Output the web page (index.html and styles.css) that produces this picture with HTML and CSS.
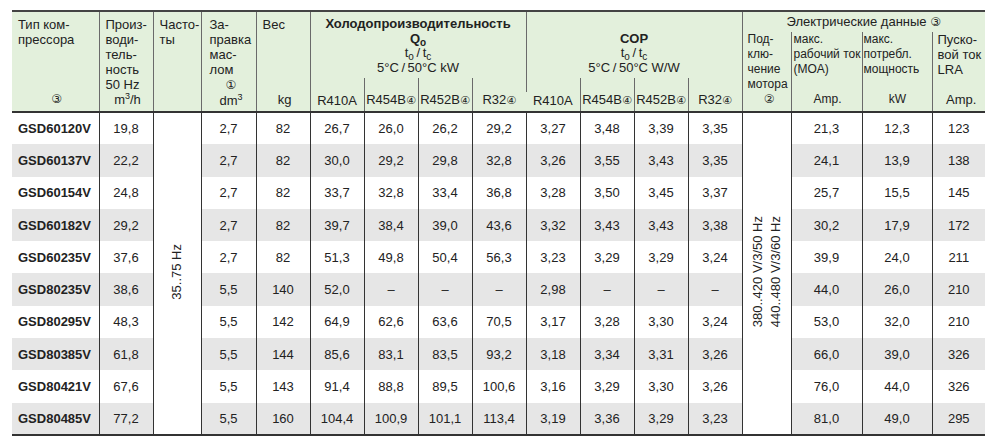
FILE: index.html
```html
<!DOCTYPE html>
<html lang="ru">
<head>
<meta charset="utf-8">
<title>GSD</title>
<link rel="stylesheet" href="styles.css">
</head>
<body>
<div class="wrap">
<table class="t">
<colgroup>
<col class="w87"><col class="w54"><col class="w48"><col class="w55"><col class="w54">
<col class="w54"><col class="w54"><col class="w54"><col class="w54">
<col class="w54"><col class="w54"><col class="w54"><col class="w54">
<col class="w49"><col class="w71"><col class="w70"><col class="w53">
</colgroup>
<thead>
<tr class="ra">
<th rowspan="3" class="hl first"><div class="hc"><span>Тип ком-<br>прессора</span><span class="ctr"><span class="ci big">③</span></span></div></th>
<th rowspan="3" class="hl"><div class="hc"><span>Произ-<br>води-<br>тель-<br>ность<br>50 Hz</span><span class="ctr">m<sup>3</sup>/h</span></div></th>
<th rowspan="3" class="hl"><div class="hc"><span>Часто-<br>ты</span></div></th>
<th rowspan="3" class="hl pl8"><div class="hc"><span>За-<br>правка<br>мас-<br>лом<br><span class="ctr blk"><span class="ci big">①</span></span></span><span class="ctr">dm<sup>3</sup></span></div></th>
<th rowspan="3" class="hl"><div class="hc"><span>Вес</span><span class="ctr">kg</span></div></th>
<th rowspan="2" colspan="4" class="grp"><b>Холодопроизводительность</b><br><b>Q<sub>o</sub></b><br>t<sub>o</sub>&#8201;/&#8201;t<sub>c</sub><br>5°C&#8201;/&#8201;50°C kW</th>
<th rowspan="2" colspan="4" class="grp"><br><b>COP</b><br>t<sub>o</sub>&#8201;/&#8201;t<sub>c</sub><br>5°C&#8201;/&#8201;50°C W/W</th>
<th colspan="4" class="el">Электрические данные <span class="ci big">③</span></th>
</tr>
<tr class="rb">
<th rowspan="2" class="he pl5"><div class="hc2"><span>Под-<br>клю-<br>чение<br>мотора</span><span class="ctr"><span class="ci big">②</span></span></div></th>
<th rowspan="2" class="he pl2"><div class="hc2"><span>макс.<br>рабочий ток<br>(MOA)</span><span class="ctr">Amp.</span></div></th>
<th rowspan="2" class="he pl1"><div class="hc2"><span>макс.<br>потребл.<br>мощность</span><span class="ctr">kW</span></div></th>
<th rowspan="2" class="he he13 pl5"><div class="hc2"><span>Пуско-<br>вой ток<br>LRA</span><span class="ctr">Amp.</span></div></th>
</tr>
<tr class="rc">
<th class="sub">R410A</th>
<th class="sub">R454B<span class="ci">④</span></th>
<th class="sub">R452B<span class="ci">④</span></th>
<th class="sub">R32<span class="ci">④</span></th>
<th class="sub gap">R410A</th>
<th class="sub">R454B<span class="ci">④</span></th>
<th class="sub">R452B<span class="ci">④</span></th>
<th class="sub">R32<span class="ci">④</span></th>
</tr>
</thead>
<tbody>
<tr>
<td class="m">GSD60120V</td><td>19,8</td>
<td rowspan="10" class="rs"><span class="rot">35..75 Hz</span></td>
<td>2,7</td><td>82</td>
<td>26,7</td><td>26,0</td><td>26,2</td><td>29,2</td>
<td>3,27</td><td>3,48</td><td>3,39</td><td>3,35</td>
<td rowspan="10" class="rs"><span class="rot">380..420 V/3/50 Hz<br>440..480 V/3/60 Hz</span></td>
<td>21,3</td><td>12,3</td><td>123</td>
</tr>
<tr class="alt">
<td class="m">GSD60137V</td><td>22,2</td><td>2,7</td><td>82</td>
<td>30,0</td><td>29,2</td><td>29,8</td><td>32,8</td>
<td>3,26</td><td>3,55</td><td>3,43</td><td>3,35</td>
<td>24,1</td><td>13,9</td><td>138</td>
</tr>
<tr>
<td class="m">GSD60154V</td><td>24,8</td><td>2,7</td><td>82</td>
<td>33,7</td><td>32,8</td><td>33,4</td><td>36,8</td>
<td>3,28</td><td>3,50</td><td>3,45</td><td>3,37</td>
<td>25,7</td><td>15,5</td><td>145</td>
</tr>
<tr class="alt">
<td class="m">GSD60182V</td><td>29,2</td><td>2,7</td><td>82</td>
<td>39,7</td><td>38,4</td><td>39,0</td><td>43,6</td>
<td>3,32</td><td>3,43</td><td>3,43</td><td>3,38</td>
<td>30,2</td><td>17,9</td><td>172</td>
</tr>
<tr>
<td class="m">GSD60235V</td><td>37,6</td><td>2,7</td><td>82</td>
<td>51,3</td><td>49,8</td><td>50,4</td><td>56,3</td>
<td>3,23</td><td>3,29</td><td>3,29</td><td>3,24</td>
<td>39,9</td><td>24,0</td><td>211</td>
</tr>
<tr class="alt">
<td class="m">GSD80235V</td><td>38,6</td><td>5,5</td><td>140</td>
<td>52,0</td><td>–</td><td>–</td><td>–</td>
<td>2,98</td><td>–</td><td>–</td><td>–</td>
<td>44,0</td><td>26,0</td><td>210</td>
</tr>
<tr>
<td class="m">GSD80295V</td><td>48,3</td><td>5,5</td><td>142</td>
<td>64,9</td><td>62,6</td><td>63,6</td><td>70,5</td>
<td>3,17</td><td>3,28</td><td>3,30</td><td>3,24</td>
<td>53,0</td><td>32,0</td><td>210</td>
</tr>
<tr class="alt">
<td class="m">GSD80385V</td><td>61,8</td><td>5,5</td><td>144</td>
<td>85,6</td><td>83,1</td><td>83,5</td><td>93,2</td>
<td>3,18</td><td>3,34</td><td>3,31</td><td>3,26</td>
<td>66,0</td><td>39,0</td><td>326</td>
</tr>
<tr>
<td class="m">GSD80421V</td><td>67,6</td><td>5,5</td><td>143</td>
<td>91,4</td><td>88,8</td><td>89,5</td><td>100,6</td>
<td>3,16</td><td>3,29</td><td>3,30</td><td>3,26</td>
<td>76,0</td><td>44,0</td><td>326</td>
</tr>
<tr class="alt">
<td class="m">GSD80485V</td><td>77,2</td><td>5,5</td><td>160</td>
<td>104,4</td><td>100,9</td><td>101,1</td><td>113,4</td>
<td>3,19</td><td>3,36</td><td>3,29</td><td>3,23</td>
<td>81,0</td><td>49,0</td><td>295</td>
</tr>
</tbody>
</table>
</div>
</body>
</html>
```

FILE: styles.css
```css
* { box-sizing: border-box; }
body {
  margin: 0;
  background: #fff;
  color: #222;
  font-family: "Liberation Sans", Arial, sans-serif;
}
.wrap { padding: 10px 0 0 12px; }

.t {
  border-collapse: collapse;
  table-layout: fixed;
  width: 973px;
  font-size: 13px;
  border-top: 2px solid #444;
  border-bottom: 2px solid #333;
}
.w87 { width: 87px; }
.w54 { width: 54px; }
.w48 { width: 48px; }
.w55 { width: 55px; }
.w49 { width: 49px; }
.w71 { width: 71px; }
.w70 { width: 70px; }
.w53 { width: 53px; }

.t th {
  font-weight: normal;
  padding: 0;
  vertical-align: top;
  text-align: left;
  background: #e3f0dc;
  border-left: 1px solid #6a6a6a;
  line-height: 15px;
  white-space: nowrap;
}
.t th.first { border-left: none; }
.t b { font-weight: bold; }
.t sup { font-size: 9px; line-height: 0; vertical-align: 5px; }
.t sub { font-size: 10px; line-height: 0; vertical-align: -3px; }

.ra { height: 21px; }
.rb { height: 44px; }
.rc { height: 34px; }

.hl { padding: 5px 3px 4px 6px !important; }
.hl.pl8 { padding-left: 8px !important; }
.hc {
  height: 90px;
  display: flex;
  flex-direction: column;
  justify-content: space-between;
}
.ctr { text-align: center; }
.blk { display: block; }

.grp {
  text-align: center !important;
  padding-top: 5px !important;
  line-height: 14.5px !important;
}
.el {
  text-align: center !important;
  vertical-align: middle !important;
}
.he {
  font-size: 12px;
  padding: 0 0 3px 0 !important;
}
.he13 { font-size: 13px; }
.pl5 { padding-left: 5px !important; }
.pl2 { padding-left: 2px !important; }
.pl1 { padding-left: 1px !important; }
.hc2 {
  height: 75px;
  display: flex;
  flex-direction: column;
  justify-content: space-between;
}

.sub {
  text-align: center !important;
  vertical-align: bottom !important;
  padding-bottom: 3px !important;
}
.t th.sub.gap {
  border-left: none;
  background: linear-gradient(#6a6a6a, #6a6a6a) 0 0 / 1px 14px no-repeat, #e3f0dc;
}
.ci {
  font-family: "DejaVu Sans", sans-serif;
  font-size: 11px;
}
.ci.big { font-size: 12px; }

.t td {
  height: 32.3px;
  padding: 0;
  text-align: center;
  vertical-align: middle;
  border-left: 1px solid #333;
  white-space: nowrap;
}
.t tbody tr:first-child td { border-top: 2px solid #333; }
.t td.m {
  border-left: none;
  text-align: left;
  padding-left: 6px;
  font-weight: bold;
}
.t tr.alt td { background: #e6e6e6; }
.t td.rs { background: #fff; }
.rot {
  display: inline-block;
  writing-mode: vertical-rl;
  transform: rotate(180deg);
  line-height: 18px;
  text-align: center;
}
```
